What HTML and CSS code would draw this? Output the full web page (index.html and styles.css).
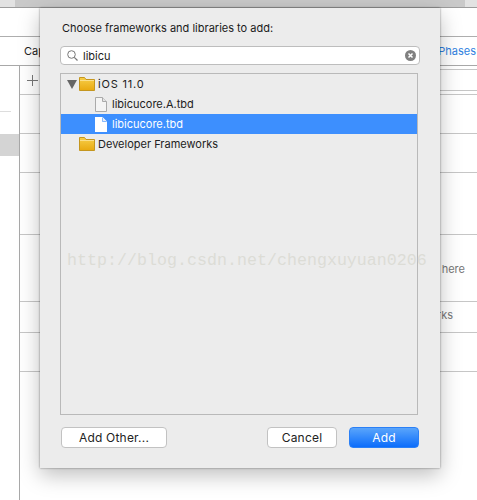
FILE: index.html
```html
<!DOCTYPE html>
<html lang="en">
  <head>
    <meta charset="UTF-8" />
    <title>Choose frameworks</title>
    <link rel="stylesheet" href="styles.css">
  </head>
  <body>
    <div class="toolbar"><div class="toolbar-inner"></div></div>
    <div class="tabs-top"></div>
    <div class="tabs">
      <span class="tab">Capabilities</span>
      <span class="tab tab-link">Build Phases</span>
    </div>
    <div class="main">
      <div class="sidebar">
        <div class="sidebar-line"></div>
        <div class="sidebar-selected"></div>
      </div>
      <div class="rows">
        <div class="row row-head">
          <svg class="plus" width="11" height="11" viewBox="0 0 11 11"><path d="M5.5 0v11M0 5.5h11" stroke="#777" fill="none"/></svg>
          <div class="head-cell"></div>
        </div>
        <div class="row"></div>
        <div class="row"></div>
        <div class="row"></div>
        <div class="row row-note">here</div>
        <div class="row row-note row-note-short">Frameworks</div>
        <div class="row"></div>
      </div>
    </div>

    <div class="dialog">
      <div class="dialog-title">Choose frameworks and libraries to add:</div>
      <div class="search">
        <svg class="search-icon" width="11" height="11" viewBox="0 0 11 11"><circle cx="4.5" cy="4.5" r="3.8" stroke="#777" fill="none"/><path d="M7.3 7.3l3.2 3.2" stroke="#777" stroke-width="1.2"/></svg>
        <span class="search-text">libicu</span>
        <svg class="search-clear" width="11" height="11" viewBox="0 0 11 11"><circle cx="5.5" cy="5.5" r="5.5" fill="#808080"/><path d="M3.5 3.5l4 4M7.5 3.5l-4 4" stroke="#fff" stroke-width="1.5"/></svg>
      </div>
      <div class="list">
        <div class="item">
          <svg class="arrow" width="10" height="9" viewBox="0 0 10 9"><path d="M0 0h10L5 9z" fill="#666"/></svg>
          <svg class="folder" width="16" height="14" viewBox="0 0 16 14">
            <defs><linearGradient id="folder-fill" x1="0" y1="0" x2="0" y2="1"><stop offset="0" stop-color="#f7cf4a"/><stop offset="1" stop-color="#e9a90f"/></linearGradient></defs>
            <path d="M.5 13.5v-13h5l1.500 2h8.500v11z" fill="url(#folder-fill)" stroke="#c4961f"/><path d="M1 3.500h14" stroke="#fbe08a"/>
          </svg>
          <span class="item-title">iOS 11.0</span>
        </div>
        <div class="item item-file">
          <svg class="file" width="12" height="15" viewBox="0 0 12 15"><path d="M.5.500h7l4 4v10h-11z" fill="#f4f4f4" stroke="#aaa"/><path d="M7.500.500v4h4" fill="#e4e4e4" stroke="#aaa"/></svg>
          <span>libicucore.A.tbd</span>
        </div>
        <div class="item item-file item-selected">
          <svg class="file" width="12" height="15" viewBox="0 0 12 15"><path d="M0 0h7.500l4.500 4.500v10.500h-12z" fill="#fff"/><path d="M7.500.500v4h4" fill="#e8eefa" stroke="#3d8ffe" stroke-width=".6"/></svg>
          <span>libicucore.tbd</span>
        </div>
        <div class="item item-folder">
          <svg class="folder" width="16" height="14" viewBox="0 0 16 14"><path d="M.5 13.5v-13h5l1.500 2h8.500v11z" fill="url(#folder-fill)" stroke="#c4961f"/><path d="M1 3.500h14" stroke="#fbe08a"/></svg>
          <span>Developer Frameworks</span>
        </div>
      </div>
      <div class="buttons">
        <button class="btn btn-other">Add Other...</button>
        <button class="btn btn-cancel">Cancel</button>
        <button class="btn btn-add">Add</button>
      </div>
    </div>

    <div class="watermark">http://blog.csdn.net/chengxuyuan0206</div>
  </body>
</html>
```

FILE: styles.css
```css
* {
  margin: 0;
  padding: 0;
  box-sizing: border-box;
}
body {
  width: 477px;
  height: 500px;
  overflow: hidden;
  background-color: #fff;
  font-family: Inter, "Liberation Sans", sans-serif;
  font-size: 11px;
  color: #222;
  position: relative;
}
.toolbar {
  height: 8px;
  background-color: #e2e2e2;
  border-bottom: 1px solid #9c9c9c;
  padding: 0 12px 0 15px;
}
.toolbar-inner {
  height: 7px;
  background-color: #c9c9c9;
}
.tabs-top {
  height: 29px;
  border-bottom: 1px solid #aeaeae;
}
.tabs {
  height: 29px;
  border-bottom: 1px solid #a8a8a8;
  display: flex;
  justify-content: space-between;
  align-items: center;
  padding: 0 1px 0 24px;
}
.tab-link {
  color: #2f7fe0;
}
.main {
  display: flex;
  height: 434px;
}
.sidebar {
  width: 20px;
  border-right: 1px solid #a8a8a8;
  padding-top: 45px;
}
.sidebar-line {
  width: 11px;
  height: 1px;
  background-color: #ddd;
}
.sidebar-selected {
  height: 22px;
  margin-top: 22px;
  background-color: #d4d4d4;
}
.rows {
  flex: 1;
  display: grid;
  grid-template-rows: 29px 39px 39px 62px 67px 31px 39px;
}
.row {
  border-bottom: 1px solid #c6c6c6;
}
.row-head {
  display: flex;
  justify-content: space-between;
  padding-top: 3px;
}
.plus {
  margin: 6px 0 0 7px;
}
.head-cell {
  width: 37px;
  height: 22px;
  border-top: 1px solid #c6c6c6;
  border-bottom: 1px solid #c6c6c6;
}
.row-note {
  color: #777;
  text-align: right;
  padding: 27px 12px 0 0;
}
.row-note-short {
  padding: 6px 24px 0 0;
}

.dialog {
  position: absolute;
  left: 40px;
  top: 8px;
  width: 400px;
  height: 460px;
  background-color: #ececec;
  box-shadow: 0 0 2px rgba(0, 0, 0, 0.45), 0 7px 20px rgba(0, 0, 0, 0.26);
  padding: 0 20px;
}
.dialog-title {
  height: 38px;
  padding: 13px 0 0 2px;
  color: #1a1a1a;
}
.search {
  height: 19px;
  background-color: #fff;
  border: 1px solid #bdbdbd;
  border-radius: 4px;
  display: flex;
  align-items: center;
  padding: 0 3px 0 6px;
  width: 360px;
}
.search-text {
  margin-left: 5px;
  flex: 1;
}
.list {
  width: 358px;
  height: 342px;
  margin-top: 8px;
  border: 1px solid #b9b9b9;
}
.item {
  height: 20px;
  display: flex;
  align-items: center;
  gap: 3px;
  padding-left: 6px;
}
.arrow {
  margin-right: -1px;
}
.item-title {
  letter-spacing: 0.8px;
}
.item-file {
  padding-left: 34px;
  gap: 5px;
}
.item-selected {
  background-color: #3d8ffe;
  color: #fff;
}
.item-folder {
  padding-left: 18px;
}
.buttons {
  display: flex;
  margin-top: 12px;
  padding-left: 1px;
}
.btn {
  height: 21px;
  width: 70px;
  background-color: #fff;
  border: 1px solid #c2c2c2;
  border-radius: 4px;
  font-family: inherit;
  font-size: 12px;
  letter-spacing: 0.2px;
  color: #222;
}
.btn-other {
  width: 106px;
  margin-right: 100px;
}
.btn-add {
  margin-left: 12px;
  border-color: #2b80f6;
  color: #fff;
  background: linear-gradient(#5aa5fb, #0c6dfb);
}

.watermark {
  position: absolute;
  left: 67px;
  top: 250px;
  font-family: "Liberation Mono", monospace;
  font-size: 16.67px;
  line-height: 22px;
  color: #dcdcd6;
  white-space: nowrap;
}
```
